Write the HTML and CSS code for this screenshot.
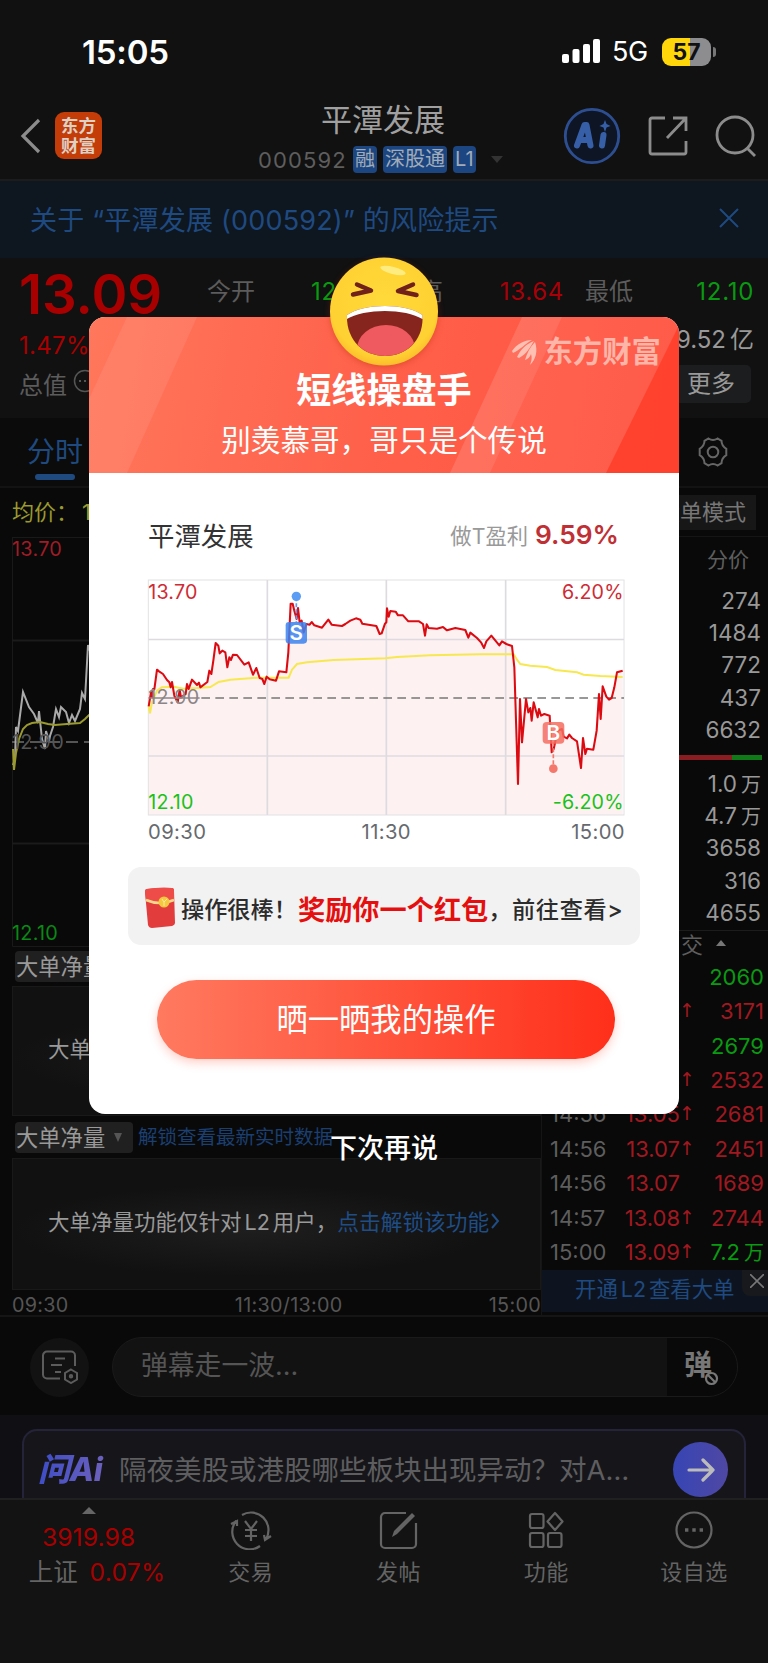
FILE: index.html
```
<!DOCTYPE html>
<html lang="zh-CN">
<head>
    <meta charset="UTF-8">
    <meta name="viewport" content="width=device-width, initial-scale=1.0">
    <title>平潭发展 000592</title>
    <link rel="stylesheet" href="styles.css">
</head>
<body>
<div class="app">
    <div class="status-bar">
        <span class="clock">15:05</span>
        <div class="status-right">
            <svg class="signal" width="38" height="25" viewBox="0 0 38 25" fill="#fff">
                <rect x="0" y="15" width="7" height="9" rx="2"/>
                <rect x="10.5" y="10" width="7" height="14" rx="2"/>
                <rect x="21" y="5" width="7" height="19" rx="2"/>
                <rect x="31" y="0" width="7" height="24" rx="2"/>
            </svg>
            <span class="network">5G</span>
            <span class="battery">57</span>
            <span class="battery-tip"></span>
        </div>
    </div>

    <header class="header">
        <svg class="back" width="22" height="38" viewBox="0 0 22 38" fill="none" stroke="#8c8c8c" stroke-width="3.2"><path d="M19 3L3 19l16 16"/></svg>
        <div class="app-logo">东方<br>财富</div>
        <div class="stock">
            <div class="stock-name">平潭发展</div>
            <div class="stock-code">
                <span>000592</span>
                <b>融</b><b>深股通</b><b>L1</b>
                <i></i>
            </div>
        </div>
        <div class="header-icons">
            <svg width="58" height="58" viewBox="0 0 58 58">
                <circle cx="29" cy="29" r="26.7" fill="#0e1626" stroke="#2d4f92" stroke-width="2.8"/>
                <g fill="none" stroke="#365fa8" stroke-width="6" stroke-linecap="round" stroke-linejoin="round">
                    <path d="M14 38.500l7.500-20.500h2L27.500 38.500M17 33h9M40.500 28l-1.500 10.500"/>
                </g>
                <path d="M42 13l1.500 4L47.500 19l-4 1.500L42 25l-1.500-4.500L36.500 19l4-2z" fill="#365fa8"/>
            </svg>
            <svg width="42" height="42" viewBox="0 0 42 42" fill="none" stroke="#8c8c8c" stroke-width="2.8">
                <path d="M18 3H5a2 2 0 0 0-2 2v32a2 2 0 0 0 2 2h32a2 2 0 0 0 2-2V26M26 3h13v13M39 3L20 23"/>
            </svg>
            <svg width="42" height="44" viewBox="0 0 42 44" fill="none" stroke="#8c8c8c" stroke-width="2.8">
                <circle cx="20" cy="21" r="18"/><path d="M32 34l8 8"/>
            </svg>
        </div>
    </header>

    <div class="notice">
        <span>关于 “平潭发展 (000592)” 的风险提示</span>
        <svg width="20" height="20" viewBox="0 0 20 20" stroke="#1f4a80" stroke-width="2"><path d="M1 1l18 18M19 1L1 19"/></svg>
    </div>

    <section class="quote">
        <div class="quote-left">
            <div class="price">13.09</div>
            <div class="percent">1.47%</div>
            <div class="cap">总值
                <svg width="24" height="24" viewBox="0 0 24 24" fill="none" stroke="#555" stroke-width="1.5"><circle cx="12" cy="12" r="10.500"/><path d="M6 12h2M11 12h2M16 12h2" stroke-width="2.200"/></svg>
            </div>
        </div>
        <div class="quote-right">
            <div class="quote-row">
                <span>今开</span><em class="down">12.90</em>
                <span>最高</span><em class="up">13.64</em>
                <span>最低</span><em class="down">12.10</em>
            </div>
            <div class="amount">9.52<small>亿</small></div>
            <div class="more">更多</div>
        </div>
    </section>

    <nav class="tabs">
        <span class="tab-active">分时</span>
        <svg width="34" height="34" viewBox="0 0 34 34" fill="none" stroke="#666" stroke-width="2">
            <path d="M12.500 3.500q4.500 3 9 0l4 2.300q0 5 4.800 8v6.400q-4.800 3-4.800 8l-4 2.300q-4.500-3-9 0l-4-2.300q0-5-4.800-8v-6.400q4.800-3 4.800-8z"/>
            <circle cx="17" cy="17" r="5.300"/>
        </svg>
    </nav>

    <main class="board">
        <div class="board-left">
            <div class="avg">均价：<span>13.05</span></div>
            <svg class="mini-chart" width="529" height="410" viewBox="0 0 529 410" fill="none">
                <path d="M0.500 0V409.500H529M0 .5H529" stroke="#191919"/>
                <path d="M0 103.500H529M0 306.500H529" stroke="#1b1b1b" stroke-width="2"/>
                <path d="M0 205H529" stroke="#555" stroke-width="2" stroke-dasharray="12 6"/>
                <polyline stroke="#aaa" stroke-width="2" points="1,228 3,222 4,190 6,194 11,155 17,170 22,177 26,186 27,174 30,202 33,212 34,194 37,204 38,199 41,190 44,172 47,180 49,170 54,175 57,186 60,178 63,184 68,172 70,156 73,162 76,108 80,120 86,118"/>
                <polyline stroke="#9a9a2e" stroke-width="2" points="1,212 2,233 4,216 7,202 11,192 15,188 20,186 28,185 36,187 43,188 55,187 68,186 73,182 77,178 86,172"/>
                <g class="axis">
                    <text x="0" y="19" fill="#a01c26">13.70</text>
                    <text x="0" y="212" fill="#555">12.90</text>
                    <text x="0" y="403" fill="#0a8a16">12.10</text>
                </g>
            </svg>
            <div class="panel-head"><span class="chip">大单净量<i></i></span></div>
            <div class="lock-panel"><span>大单净量功能仅针对L2用户，</span><a>点击解锁该功能</a></div>
            <div class="panel-head second"><span class="chip">大单净量<i></i></span><a>解锁查看最新实时数据</a></div>
            <div class="lock-panel"><span>大单净量功能仅针对<u>L2</u>用户，</span><a>点击解锁该功能</a>
                <svg width="9" height="16" viewBox="0 0 9 16" fill="none" stroke="#1f4d86" stroke-width="2"><path d="M1 1l6 7-6 7"/></svg>
            </div>
            <div class="times"><span>09:30</span><span>11:30/13:00</span><span>15:00</span></div>
        </div>

        <aside class="board-right">
            <div class="mode"><span>大单模式</span></div>
            <div class="side-title">分价</div>
            <ul class="book">
                <li>274</li><li>1484</li><li>772</li><li>437</li><li>6632</li>
            </ul>
            <div class="ratio"><i></i></div>
            <ul class="book">
                <li>1.0<small>万</small></li><li>4.7<small>万</small></li><li>3658</li><li>316</li><li>4655</li>
            </ul>
            <div class="deal-title">成 交<i></i></div>
            <ul class="deals">
                <li><span>14:56</span><em>13.04</em><i></i><b class="down">2060</b></li>
                <li><span>14:56</span><em>13.05</em><i>↑</i><b>3171</b></li>
                <li><span>14:56</span><em>13.04</em><i></i><b class="down">2679</b></li>
                <li><span>14:56</span><em>13.05</em><i>↑</i><b>2532</b></li>
                <li><span>14:56</span><em>13.05</em><i>↑</i><b>2681</b></li>
                <li><span>14:56</span><em>13.07</em><i>↑</i><b>2451</b></li>
                <li><span>14:56</span><em>13.07</em><i></i><b>1689</b></li>
                <li><span>14:57</span><em>13.08</em><i>↑</i><b>2744</b></li>
                <li><span>15:00</span><em>13.09</em><i>↑</i><b class="down">7.2<small>万</small></b></li>
            </ul>
            <div class="l2"><span>开通<u>L2</u>查看大单</span>
                <div class="l2-close"><svg width="14" height="14" viewBox="0 0 14 14" stroke="#777" stroke-width="1.600"><path d="M0 0l14 14M14 0L0 14"/></svg></div>
            </div>
        </aside>
    </main>

    <div class="danmu">
        <div class="danmu-set">
            <svg width="38" height="34" viewBox="0 0 38 34" fill="none" stroke="#5c5c5c" stroke-width="2">
                <path d="M19 28.500H6a4 4 0 0 1-4-4V5.500a4 4 0 0 1 4-4h24a4 4 0 0 1 4 4V16M14 8.500h10M10 15h11M14 22h6"/>
                <path d="M30 19.500l6 3.500v6.500L30 33l-6-3.500V23z"/><circle cx="30" cy="26.300" r="1.200"/>
            </svg>
        </div>
        <div class="danmu-input">
            <span>弹幕走一波...</span>
            <div class="danmu-off">弹
                <svg width="15" height="15" viewBox="0 0 15 15" fill="#090909" stroke="#777" stroke-width="2.200"><circle cx="7.500" cy="7.500" r="5.500"/><path d="M4 4l7 7"/></svg>
            </div>
        </div>
    </div>

    <div class="ask">
        <div class="ask-card">
            <span class="ask-logo">问Ai</span>
            <span class="ask-text">隔夜美股或港股哪些板块出现异动？对A…</span>
            <div class="ask-go"><svg width="28" height="24" viewBox="0 0 28 24" fill="none" stroke="#bbb" stroke-width="3.200" stroke-linecap="round" stroke-linejoin="round"><path d="M2 12h24M16 2l10 10-10 10"/></svg></div>
        </div>
    </div>

    <footer class="tabbar">
        <div class="index">
            <i></i>
            <div class="index-num">3919.98</div>
            <div class="index-row">上证 <span>0.07%</span></div>
        </div>
        <div class="item">
            <svg width="44" height="40" viewBox="0 0 44 40" fill="none" stroke="#646464" stroke-width="2.200">
                <path d="M13 5a17.500 17.500 0 0 1 24 24M31 36A17.500 17.500 0 0 1 7 11M2 14l6-3v5M42 26l-6 4-1-5M16 11l6 8 6-8M22 19v12M16 20h12M16 26h12"/>
            </svg>
            <span>交易</span>
        </div>
        <div class="item">
            <svg width="40" height="40" viewBox="0 0 40 40" fill="none" stroke="#646464" stroke-width="2.200">
                <path d="M27 3H6a4 4 0 0 0-4 4v27a4 4 0 0 0 4 4h27a4 4 0 0 0 4-4V13"/>
                <path d="M13 27l2-6L33 3l3 3-18 18z" fill="#646464" stroke="none"/>
            </svg>
            <span>发帖</span>
        </div>
        <div class="item">
            <svg width="40" height="40" viewBox="0 0 40 40" fill="none" stroke="#646464" stroke-width="2.200">
                <rect x="4" y="4" width="13.500" height="14" rx="2"/><path d="M29 3l7.500 8.500L29 20l-7.500-8.500z" stroke-linejoin="round"/>
                <rect x="4" y="23" width="13.500" height="14" rx="2"/><rect x="22" y="23" width="13.500" height="14" rx="2"/>
            </svg>
            <span>功能</span>
        </div>
        <div class="item">
            <svg width="40" height="40" viewBox="0 0 40 40" fill="none" stroke="#646464" stroke-width="2.200">
                <circle cx="20" cy="20" r="17.500"/><path d="M11 20h3.400M18.300 20h3.400M25.600 20H29" stroke-width="3.400"/>
            </svg>
            <span>设自选</span>
        </div>
    </footer>

    <!-- 弹窗 -->
    <div class="modal">
        <svg class="emoji" width="110" height="110" viewBox="0 0 110 110">
            <defs>
                <radialGradient id="face" cx=".5" cy=".42" r=".62">
                    <stop offset="0" stop-color="#ffd93a"/><stop offset=".8" stop-color="#ffd132"/><stop offset="1" stop-color="#f9b428"/>
                </radialGradient>
                <clipPath id="mouth"><path d="M18 58C35 46 77 46 93.500 58C95 83 78 99 56 99C34 99 17 83 18 58z"/></clipPath>
            </defs>
            <circle cx="55" cy="54.500" r="54" fill="url(#face)"/>
            <ellipse cx="64" cy="13.500" rx="13" ry="3.500" transform="rotate(14 64 13.500)" fill="#ffec80"/>
            <g clip-path="url(#mouth)">
                <rect x="10" y="40" width="90" height="65" fill="#85251d"/>
                <ellipse cx="57" cy="92" rx="29" ry="24" fill="#ee5a5f"/>
                <path d="M16 63C35 51 77 51 95 63V40H16z" fill="#fff"/>
            </g>
            <path d="M28 27.500L42 33.500L24 37.500M84 27.500L69 34L87.500 38" fill="none" stroke="#70211a" stroke-width="4.500" stroke-linecap="round" stroke-linejoin="round"/>
        </svg>
        <div class="modal-head">
            <svg class="rays" width="590" height="156" viewBox="0 0 590 156">
                <path d="M38 0h70L38 156H0V82z" fill="#fff" opacity=".08"/>
                <path d="M433 0h40l-72 156h-40z" fill="#fff" opacity=".13"/>
                <path d="M473 0H590V10L517 156H401z" fill="#fff" opacity=".05"/>
                <path d="M590 8V156H517z" fill="#ff3a25" opacity=".7"/>
            </svg>
            <div class="brand">
                <svg width="26" height="27" viewBox="0 0 26 27" fill="#ffc0b4">
                    <path d="M0 12C5 5 12 1 20 1C13 5 8 11 1 14zM5 18C9 10 14 5 22 2C18 8 15 15 7 19zM13 21C15 14 18 8 23 3C26 12 24 20 18 26C20 21 20 18 19 15C18 18 16 20 13 21z"/>
                </svg>
                <span>东方财富</span>
            </div>
            <h2>短线操盘手</h2>
            <p>别羡慕哥，哥只是个传说</p>
        </div>
        <div class="modal-body">
            <div class="profit">
                <span class="profit-name">平潭发展</span>
                <span class="profit-label">做T盈利</span>
                <b>9.59%</b>
            </div>
            <svg class="chart" width="478" height="237" viewBox="50 235 1434 711" fill="none">
                <path d="M55 617L62 575L68 565L72 566L83 507L98 520L124 550L132 585L142 605L150 570L166 580L173 545L185 537L206 553L231 544L237 510L243 520L256 427L270 455L291 480L300 465L320 463L342 495L355 485L368 520L377 502L388 532L402 548L409 528L437 540L446 512L468 515L474 455L481 309L487 309L497 350L503 322L512 360L520 395L530 370L550 370L575 380L594 357L608 374L635 374L677 353L698 369L738 376L752 400L764 369L770 323L775 340L787 330L820 345L834 362L868 362L884 400L889 372L910 385L938 379L950 388L980 381L1005 388L1014 411L1026 397L1061 442L1083 405L1107 434L1120 424L1145 436L1163 850L1169 595L1175 725L1187 595L1200 650L1212 605L1223 645L1258 645L1264 755L1290 690L1310 713L1317 702L1340 722L1352 802L1358 712L1365 750L1389 747L1406 580L1411 650L1417 560L1436 597L1448 580L1460 515L1477 510V943H55z" fill="#fdf1f1"/>
                <rect x="54" y="238" width="1427" height="705" stroke="#e3e1e4" stroke-width="3"/>
                <path d="M54 416.500H1481M54 766H1481M411 238V943M768 238V943M1126 238V943" stroke="#dedbe0" stroke-width="5"/>
                <path d="M213 592H1481" stroke="#777" stroke-width="4.500" stroke-dasharray="26 16"/>
                <polyline stroke="#f7e84f" stroke-width="6" points="55,617 59,638 65,605 80,570 95,560 130,558 160,564 200,562 240,559 265,544 300,537 380,531 475,531 485,507 500,490 530,485 610,478 765,473 800,469 900,464 1050,461 1150,461 1160,477 1170,490 1200,495 1250,499 1275,508 1340,515 1360,522 1410,526 1477,529"/>
                <polyline stroke="#dc0b12" stroke-width="6.200" stroke-linejoin="round" points="55,617 62,575 66,590 68,565 72,566 80,507 86,512 98,520 110,538 117,545 121,560 125,544 132,585 142,605 148,568 152,590 166,580 170,550 175,565 185,537 200,553 206,546 210,560 231,544 237,510 243,520 249,480 256,427 264,435 268,458 276,450 285,455 291,500 297,470 302,478 308,462 320,463 342,492 355,485 368,522 378,502 388,532 396,535 402,550 409,528 418,536 437,540 446,512 468,515 474,455 481,309 487,309 492,330 499,355 503,322 508,365 514,360 520,395 528,370 538,372 544,364 552,374 575,381 594,357 604,372 635,376 645,370 660,360 677,353 690,357 696,369 738,376 748,400 754,398 764,369 768,365 770,323 775,348 780,331 796,333 803,344 818,344 834,362 866,362 878,370 884,405 889,371 895,382 920,384 938,379 950,389 975,382 1005,388 1014,411 1020,396 1040,412 1052,425 1061,442 1068,422 1083,405 1107,434 1115,422 1128,430 1145,436 1152,500 1163,850 1169,595 1175,725 1187,595 1194,635 1200,622 1204,660 1210,605 1222,650 1226,625 1232,645 1242,640 1258,645 1264,755 1270,745 1282,690 1295,685 1300,708 1310,713 1317,702 1325,712 1340,722 1352,802 1358,712 1365,760 1370,744 1389,747 1399,690 1406,580 1411,655 1417,557 1428,588 1436,597 1444,592 1452,560 1460,515 1477,510"/>
                <path d="M498 290V365" stroke="#5b9cf5" stroke-width="5" stroke-dasharray="12 6"/>
                <circle cx="498" cy="287" r="14" fill="#5b9cf5"/>
                <rect x="466" y="364" width="64" height="65" rx="10" fill="#3b82f0" opacity=".85"/>
                <path d="M1269 725V800" stroke="#f4786c" stroke-width="5" stroke-dasharray="12 6"/>
                <circle cx="1269" cy="804" r="13" fill="#f4786c"/>
                <rect x="1237" y="664" width="65" height="65" rx="12" fill="#f46d60" opacity=".85"/>
                <g class="mark"><text x="498" y="418">S</text><text x="1269" y="718">B</text></g>
                <g class="label">
                    <text x="54" y="295" fill="#cf2b35">13.70</text>
                    <text x="54" y="611" fill="#8b8587">12.90</text>
                    <text x="54" y="924" fill="#19c219">12.10</text>
                    <text x="1480" y="295" fill="#cf2b35" text-anchor="end">6.20%</text>
                    <text x="1480" y="924" fill="#19c219" text-anchor="end">-6.20%</text>
                </g>
                <path d="M54 592H208" stroke="#8b8587" stroke-width="4"/>
            </svg>
            <div class="chart-times"><span>09:30</span><span>11:30</span><span>15:00</span></div>
            <div class="reward">
                <svg width="32" height="42" viewBox="0 0 32 42">
                    <path d="M3 2Q16 0 28 1Q30 1 30 4L31 36Q31 38 28 39L8 41Q5 41 4 38L1 5Q1 2 3 2z" fill="#e23c3c"/>
                    <path d="M3 2Q16 0 28 1Q30 1 30 4L30 13Q16 18 2 13L1 5Q1 2 3 2z" fill="#ee4c48"/>
                    <path d="M2 13Q16 19 30 13" stroke="#f7d98a" stroke-width="2.500" fill="none"/>
                    <circle cx="20" cy="15" r="5.500" fill="#f4c93f"/><path d="M18 12l2 3 3-3M20 15v4" stroke="#fbe9a0" fill="none"/>
                </svg>
                <span>操作很棒！</span><strong>奖励你一个红包</strong><span>，前往查看&gt;</span>
            </div>
            <button class="share">晒一晒我的操作</button>
        </div>
    </div>
    <div class="later">下次再说</div>
</div>
</body>
</html>
```
FILE: styles.css
```
* {
    box-sizing: border-box;
}
body {
    margin: 0;
    background: #111;
    font-family: Inter, "Noto Sans CJK SC", sans-serif;
}
ul, h2, p {
    margin: 0;
    padding: 0;
    list-style: none;
}
em, i {
    font-style: normal;
}
u {
    text-decoration: none;
    margin: 0 3px;
}
svg {
    display: block;
    flex: none;
}
.app {
    position: relative;
    width: 768px;
    height: 1663px;
    overflow: hidden;
    background: #090909;
    white-space: nowrap;
}

/* 状态栏 */
.status-bar {
    height: 95px;
    padding: 8px 52px 0 82px;
    display: flex;
    align-items: center;
    justify-content: space-between;
    background: #111;
    color: #fff;
}
.clock {
    font-size: 33px;
    font-weight: 600;
    letter-spacing: -0.2px;
}
.status-right {
    display: flex;
    align-items: center;
    height: 30px;
}
.network {
    margin-left: 12px;
    width: 50px;
    font-size: 27px;
    letter-spacing: -0.3px;
}
.battery {
    width: 49px;
    height: 28px;
    border-radius: 9px;
    background: linear-gradient(90deg, #ffd60a 57%, #8d8d8f 57%);
    color: #111;
    font-size: 23px;
    font-weight: 700;
    line-height: 28px;
    text-align: center;
}
.battery-tip {
    width: 3px;
    height: 10px;
    margin-left: 2px;
    border-radius: 0 4px 4px 0;
    background: #777;
}

/* 顶部 */
.header {
    height: 86px;
    display: flex;
    align-items: center;
    padding: 0 11px 3px 20px;
    background: #111;
    border-bottom: 2px solid #1c1c1c;
}
.app-logo {
    width: 47px;
    height: 47px;
    margin-left: 13px;
    padding-top: 4px;
    border-radius: 9px;
    background: #c43c08;
    color: #ddd0c5;
    font-size: 17.5px;
    font-weight: 700;
    line-height: 19.5px;
    text-align: center;
}
.stock {
    width: 250px;
    margin-left: 156px;
    padding-top: 4px;
    text-align: center;
}
.stock-name {
    height: 44px;
    font-size: 31px;
    line-height: 36px;
    color: #a0a0a0;
}
.stock-code {
    display: flex;
    align-items: center;
    height: 28px;
    font-size: 22px;
    color: #5e5e5e;
}
.stock-code span {
    width: 95px;
    text-align: left;
    letter-spacing: 1.1px;
}
.stock-code b {
    height: 27px;
    margin-right: 6px;
    padding: 0 2px;
    border-radius: 4px;
    background: #1c4681;
    color: #a2acb8;
    font-size: 20px;
    font-weight: 400;
    line-height: 27px;
}
.stock-code i {
    margin-left: 9px;
    border: 6px solid transparent;
    border-top: 7px solid #333;
    border-bottom: 0;
}
.header-icons {
    margin-left: auto;
    display: flex;
    align-items: center;
    gap: 26px;
}
.notice {
    height: 77px;
    padding: 0 29px 3px 30px;
    display: flex;
    align-items: center;
    justify-content: space-between;
    background: #0e1620;
    color: #1f4a80;
    font-size: 27px;
    letter-spacing: 0.2px;
}

/* 行情 */
.quote {
    height: 160px;
    display: flex;
    background: #111;
}
.quote-left {
    width: 208px;
    padding: 1px 0 0 19px;
}
.price {
    height: 67px;
    color: #a80000;
    font-size: 54.500px;
    font-weight: 600;
    line-height: 71px;
}
.percent {
    height: 38px;
    color: #a80000;
    font-size: 24px;
    line-height: 40px;
    letter-spacing: 0.3px;
}
.cap {
    display: flex;
    gap: 6px;
    height: 40px;
    color: #5c5c5c;
    font-size: 24px;
    line-height: 44px;
}
.cap svg {
    margin-top: 5px;
}
.quote-right {
    flex: 1;
    padding: 1px 14px 0 0;
    display: flex;
    flex-direction: column;
    align-items: flex-end;
}
.quote-row {
    width: 100%;
    display: grid;
    grid-template-columns: 100px 67px 70px 120px 70px 120px;
    height: 64px;
    line-height: 66px;
    font-size: 24px;
    color: #5c5c5c;
}
.quote-row em {
    text-align: right;
    letter-spacing: 0.7px;
}
.quote-row em + span {
    padding-left: 21px;
}
.quote-row em:nth-child(2) {
    text-align: left;
    padding-left: 4px;
}
.up {
    color: #a80008;
}
.down {
    color: #0a9a12;
}
.amount {
    height: 42px;
    color: #999;
    font-size: 24px;
    line-height: 34px;
}
.amount small {
    font-size: 24px;
}
.more {
    width: 130px;
    height: 38px;
    margin-right: 3px;
    padding-right: 16px;
    border-radius: 5px;
    background: #1c1d1e;
    color: #999;
    font-size: 24px;
    line-height: 38px;
    text-align: right;
}
.tabs {
    height: 70px;
    padding: 0 38px 0 27px;
    display: flex;
    align-items: center;
    justify-content: space-between;
    background: #0b0b0b;
    border-bottom: 2px solid #131313;
}
.tab-active {
    height: 56px;
    color: #1f4a80;
    font-size: 28px;
    line-height: 56px;
}
.tab-active::after {
    content: "";
    display: block;
    width: 40px;
    height: 6px;
    margin: -6px auto 0;
    border-radius: 3px;
    background: #1f4a80;
}

/* 分时区 */
.board {
    height: 829px;
    display: flex;
    border-bottom: 2px solid #151515;
}
.board-left {
    width: 541px;
    padding-left: 12px;
}
.avg {
    height: 49px;
    color: #9a9a2e;
    font-size: 22px;
    line-height: 48px;
}
.avg span {
    margin-left: 4px;
}
.axis {
    font-size: 19.8px;
    letter-spacing: 0.3px;
}
.panel-head {
    height: 39px;
    padding: 4px 0 0 3px;
    display: flex;
    line-height: 31px;
}
.panel-head.second {
    height: 42px;
    padding-top: 6px;
}
.panel-head a {
    margin-left: 5px;
    color: #1b3f70;
    font-size: 19.5px;
}
.chip {
    display: flex;
    align-items: center;
    width: 118px;
    height: 31px;
    padding-left: 1px;
    border-radius: 4px;
    background: #202020;
    color: #999;
    font-size: 22.3px;
}
.chip i {
    margin-left: 9px;
    border: 4.5px solid transparent;
    border-top: 9px solid #555;
    border-bottom: 0;
}
.lock-panel {
    height: 130px;
    display: flex;
    align-items: center;
    padding: 0 0 7px 35px;
    border: 1px solid #191919;
    background: radial-gradient(ellipse 45% 35% at 45% 55%, #1e1e1e, transparent), #111;
    color: #999;
    font-size: 21.5px;
}
.lock-panel a {
    color: #1f4d86;
    font-size: 21.7px;
}
.lock-panel svg {
    margin-left: 2px;
}
.second + .lock-panel {
    height: 132px;
}
.times {
    display: flex;
    justify-content: space-between;
    color: #555;
    font-size: 19.8px;
    line-height: 31px;
    letter-spacing: 0.3px;
}
.times span:nth-child(2) {
    margin-left: 20px;
}

/* 盘口 */
.board-right {
    width: 227px;
    border-left: 1px solid #151515;
}
.mode {
    height: 49px;
    padding: 7px 12px 0 0;
    display: flex;
    justify-content: flex-end;
    border-bottom: 1px solid #151515;
}
.mode span {
    width: 110px;
    height: 35px;
    padding-left: 12px;
    background: #171717;
    color: #777;
    font-size: 22px;
    line-height: 34px;
}
.side-title {
    height: 48px;
    padding-right: 19px;
    color: #5e5e5e;
    font-size: 21px;
    line-height: 45px;
    text-align: right;
}
.book li {
    height: 32.2px;
    padding-right: 7px;
    color: #999;
    font-size: 22.5px;
    line-height: 32px;
    text-align: right;
}
small {
    margin-left: 4px;
    font-size: 20px;
}
.ratio {
    height: 5px;
    margin: 9px 6px 8px 8px;
    background: linear-gradient(90deg, #8a1d22 86%, #107a18 86%);
}
.deal-title {
    height: 30px;
    margin-top: 1px;
    padding: 0 42px 4px 0;
    display: flex;
    align-items: center;
    justify-content: flex-end;
    border-top: 1px solid #1c1c1c;
    color: #5e5e5e;
    font-size: 22px;
}
.deal-title i {
    margin-left: 13px;
    border: 5.5px solid transparent;
    border-bottom: 6px solid #777;
    border-top: 0;
}
.deals li {
    display: grid;
    grid-template-columns: 59px 71px 19px 65px;
    height: 34.4px;
    padding-left: 8px;
    color: #a01820;
    font-size: 22px;
    line-height: 34px;
}
.deals span {
    color: #5e5e5e;
}
.deals em, .deals b {
    text-align: right;
    font-weight: 400;
}
.deals i {
    font: 19px/32px "DejaVu Sans", sans-serif;
    margin-left: -1px;
}
.l2 {
    position: relative;
    height: 42px;
    margin-top: 1px;
    background: #0d141f;
    color: #1f4a80;
    font-size: 21.4px;
    line-height: 38px;
    padding-left: 33px;
}
.l2-close {
    position: absolute;
    right: 0;
    top: 0;
    width: 26px;
    height: 26px;
    padding: 4px 0 0 8px;
    border-radius: 0 0 0 8px;
    background: #17191d;
}

/* 弹幕 */
.danmu {
    height: 98px;
    padding: 2px 30px 0 30px;
    display: flex;
    align-items: center;
    justify-content: space-between;
}
.danmu-set {
    width: 59px;
    height: 59px;
    border-radius: 50%;
    display: flex;
    align-items: center;
    justify-content: center;
    background: #121212;
}
.danmu-input {
    width: 626px;
    height: 60px;
    display: flex;
    justify-content: space-between;
    border: 1px solid #1a1a1a;
    border-radius: 30px;
    overflow: hidden;
    background: #121212;
    color: #555;
    font-size: 26.8px;
    line-height: 54px;
    padding-left: 28px;
}
.danmu-off {
    position: relative;
    width: 70px;
    padding-left: 17px;
    background: #090909;
    color: #777;
    font-size: 28px;
    font-weight: 700;
}
.danmu-off svg {
    position: absolute;
    left: 37px;
    top: 33px;
}
.ask {
    height: 83px;
    padding: 14px 22px 0;
    background: #101014;
    overflow: hidden;
}
.ask-card {
    height: 90px;
    padding: 12px 16px 0 14px;
    display: flex;
    border: 2px solid #25233a;
    border-radius: 15px;
    background: #16161a;
}
.ask-logo {
    width: 81px;
    background: linear-gradient(100deg, #3a4bc8, #7d68b8);
    -webkit-background-clip: text;
    background-clip: text;
    color: transparent;
    font-size: 32px;
    font-style: italic;
    font-weight: 800;
    line-height: 54px;
    letter-spacing: -0.5px;
}
.ask-text {
    color: #5e5e60;
    font-size: 27.5px;
    line-height: 54px;
}
.ask-go {
    width: 55px;
    height: 55px;
    margin: -1px 0 0 auto;
    border-radius: 50%;
    display: flex;
    align-items: center;
    justify-content: center;
    background: linear-gradient(90deg, #3745b5, #4f48a3);
}

/* 底部导航 */
.tabbar {
    height: 165px;
    display: grid;
    grid-template-columns: 177px repeat(4, 147.75px);
    background: #131313;
    border-top: 2px solid #202020;
    color: #646464;
    font-size: 22px;
}
.index {
    display: flex;
    flex-direction: column;
    align-items: center;
}
.index i {
    margin-top: 7px;
    border: 7px solid transparent;
    border-bottom: 7px solid #666;
    border-top: 0;
}
.index-num {
    padding-top: 5px;
    color: #a80000;
    font-size: 24.8px;
    line-height: 36px;
}
.index-row {
    padding-left: 17px;
    font-size: 24.5px;
    line-height: 34px;
}
.index-row span {
    margin-left: 5px;
    color: #a80000;
    letter-spacing: 0.3px;
}
.item {
    padding-top: 10px;
    display: flex;
    flex-direction: column;
    align-items: center;
}
.item span {
    margin-top: 5px;
    line-height: 34px;
    letter-spacing: 0.5px;
}

/* 弹窗 */
.modal {
    position: absolute;
    left: 89px;
    top: 317px;
    width: 590px;
    height: 797px;
    border-radius: 16px;
    background: #fff;
}
.emoji {
    position: absolute;
    z-index: 1;
    left: 240px;
    top: -60px;
    filter: drop-shadow(0 2px 3px rgba(180, 40, 10, .35));
}
.modal-head {
    position: relative;
    height: 156px;
    padding-top: 48px;
    border-radius: 16px 16px 0 0;
    overflow: hidden;
    background: linear-gradient(100deg, #ff775c, #ff604a 50%, #ff5240);
    color: #fff;
    text-align: center;
}
.rays {
    position: absolute;
    left: 0;
    top: 0;
}
.brand {
    position: absolute;
    right: 18px;
    top: 16px;
    display: flex;
    align-items: center;
    gap: 5px;
    color: #ffb5a7;
    font-size: 29.400px;
    font-weight: 700;
    line-height: 38px;
}
.modal-head h2 {
    position: relative;
    font-size: 35.1px;
    font-weight: 700;
    line-height: 50px;
}
.modal-head p {
    position: relative;
    font-size: 29.6px;
    line-height: 50px;
}
.modal-body {
    padding: 36px 39px 0;
}
.profit {
    height: 50px;
    padding: 0 21px 0 20px;
    display: flex;
    align-items: center;
    color: #333;
}
.profit-name {
    flex: 1;
    font-size: 26.4px;
}
.profit-label {
    margin-right: 7px;
    color: #999;
    font-size: 21.3px;
}
.profit b {
    color: #bf3035;
    font-size: 26.3px;
    font-weight: 600;
}
.chart {
    margin: 20px 0 0 19px;
}
.chart .label {
    font-size: 59px;
    letter-spacing: 0.5px;
}
.chart .mark {
    font-size: 62px;
    font-weight: 600;
    fill: #fff;
    text-anchor: middle;
}
.chart-times {
    display: flex;
    justify-content: space-between;
    padding: 0 15px 0 20px;
    color: #666a6e;
    font-size: 20.2px;
    line-height: 31px;
    letter-spacing: 0.4px;
}
.chart-times span:nth-child(2) {
    margin-left: -5px;
}
.reward {
    height: 78px;
    margin-top: 20px;
    padding: 3px 0 0 16px;
    display: flex;
    align-items: center;
    border-radius: 13px;
    background: #f2f2f2;
    color: #2c2c2c;
    font-size: 23.2px;
    font-weight: 500;
}
.reward svg {
    margin-right: 5px;
}
.reward strong {
    margin-left: 1px;
    color: #e60f0f;
    font-size: 27.2px;
}
.reward strong + span {
    letter-spacing: 0.6px;
}
.share {
    display: block;
    width: 458px;
    height: 79px;
    margin: 35px 0 0 29px;
    padding-bottom: 5px;
    border: 0;
    border-radius: 40px;
    background: linear-gradient(90deg, #ff7a60, #ff2f1a);
    box-shadow: 0 4px 10px rgba(255, 70, 40, .25);
    color: #fff;
    font-family: inherit;
    font-size: 31.3px;
}
.later {
    position: absolute;
    left: 330px;
    top: 1129px;
    color: #fff;
    font-size: 27px;
    font-weight: 500;
    line-height: 40px;
}
```
